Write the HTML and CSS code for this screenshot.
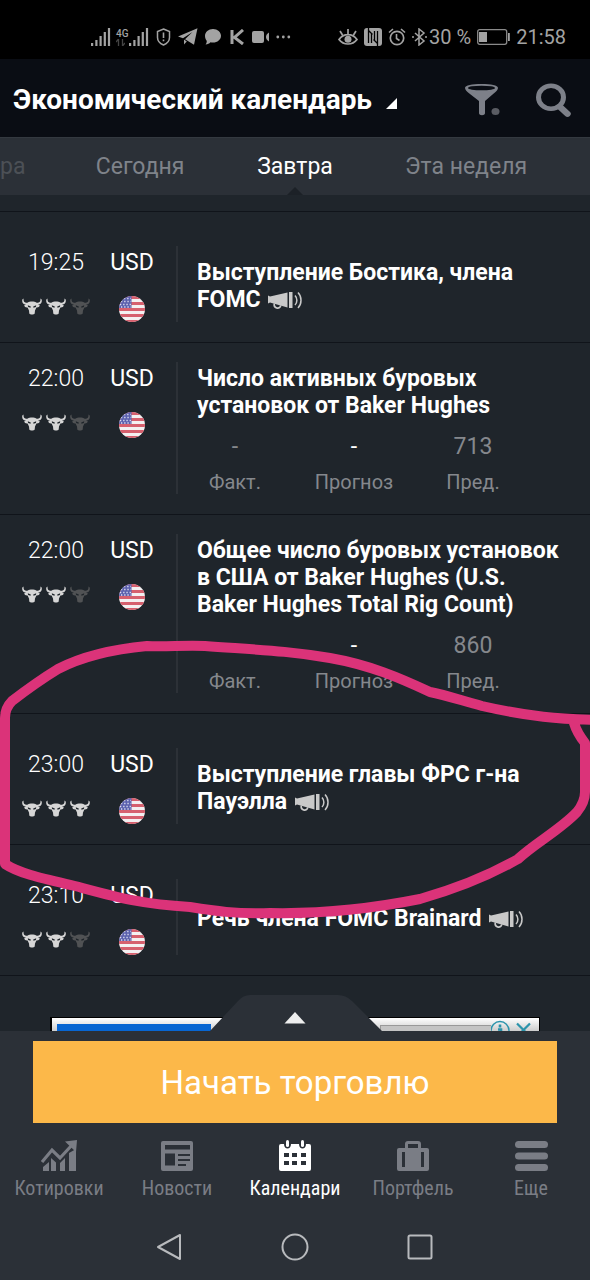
FILE: index.html
```html
<!DOCTYPE html>
<html lang="ru">
<head>
<meta charset="utf-8">
<meta name="viewport" content="width=device-width, initial-scale=1">
<title>Экономический календарь</title>
<link rel="stylesheet" href="styles.css">
</head>
<body>
<svg class="defs" aria-hidden="true">
  <symbol id="bull" viewBox="0 0 20 17">
    <path d="M1.600.5L.3 1.500C-.3 4.300 1 6.500 4 6.700L2.200 7.200c.3 1.600 1.600 2.400 3.400 2.200L7 12.500l.3 3c.8 1.400 4.600 1.400 5.400 0l.3-3 1.400-3.100c1.800.2 3.100-.6 3.400-2.200L16 6.700c3-.2 4.300-2.400 3.700-5.200L18.400.5c.3 2.700-.4 4-2.400 4.300-1.500.1-2-.6-3.500-1-1.700-.3-3.300-.3-5 0-1.500.4-2 1.100-3.500 1C2 4.500 1.300 3.200 1.600.5z"/>
    <path class="bull-eye" d="M5.800 7.300l3 1.200-.3 1.200-2.400-.8zM14.200 7.300l-3 1.200.3 1.200 2.400-.8z"/>
  </symbol>
  <symbol id="flag" viewBox="0 0 26 26">
    <clipPath id="disc"><circle cx="13" cy="13" r="13"/></clipPath>
    <g clip-path="url(#disc)">
      <path fill="#f4f0f1" d="M0 0h26v26H0z"/>
      <path fill="#d6606e" d="M0 0h26v3H0zM0 6h26v3H0zM0 12h26v3H0zM0 18h26v3H0zM0 24h26v2H0z"/>
      <path fill="#5a60ad" d="M0 0h12.500v12H0z"/>
      <path stroke="#dfe0f2" stroke-width="1.300" stroke-dasharray="1.300 1.900" d="M5 2.500h7M2 5.500h10M1 8.500h11M2 11h10"/>
    </g>
  </symbol>
  <symbol id="horn" viewBox="0 0 34 19">
    <path fill="#c9c9c9" d="M0 4.500l2 1L19.500 1.500v15L2 11.500l-2 1zM21 1h3.500v16H21z"/>
    <path fill="none" stroke="#c9c9c9" stroke-width="1.700" d="M6.200 12.500c-.6 5.500 6.300 6 6.500 1.800"/>
    <path fill="none" stroke="#c9c9c9" stroke-width="1.500" d="M27 4.500c2.500 2.500 2.500 7 0 9.500M30 1.500c4 4 4 11.500 0 15.500"/>
  </symbol>
  <symbol id="bars" viewBox="0 0 20 18">
    <path d="M0 15h2.200v3H0zM4.300 12h2.200v6H4.300zM8.500 8h2.200v10H8.500zM12.700 4h2.200v14h-2.200zM16.900 0h2.200v18h-2.200z"/>
  </symbol>
</svg>

<div class="phone">
  <div class="status">
    <div class="status-group">
      <svg class="s-bars" viewBox="0 0 20 18"><use href="#bars"/></svg>
      <span class="net"><span class="net-name">4G</span><svg class="s-arrows" viewBox="0 0 9 7"><path d="M2.500 7V0L0 3M6.500 0v7L9 4" fill="none" stroke="#444" stroke-width="1.300"/></svg></span>
      <svg class="s-bars tight" viewBox="0 0 20 18"><use href="#bars"/></svg>
      <svg class="s-shield" viewBox="0 0 15 18"><path d="M7.500 1l6 2.500v6c0 3.500-2.500 6-6 7.500-3.500-1.500-6-4-6-7.500v-6z" fill="none" stroke="#a3a3a3" stroke-width="1.500"/><path d="M6.700 4.500h1.600v5.500H6.700zM6.700 11.500h1.600v1.700H6.700z"/></svg>
      <svg class="s-plane" viewBox="0 0 20 17"><path d="M19.500.3L0 8.500l5 1.800L14.500 4 7 11.200l9 5.500z"/><path d="M6 11.500v5l2.800-3z"/></svg>
      <svg class="s-chat" viewBox="0 0 16 16"><path d="M8 0c4.500 0 8 3 8 6.800s-3.500 6.800-8 6.800c-1 0-1.700-.1-2.500-.3C4.300 14.600 2.700 15.500.6 15.500c.8-1 1.200-2.200 1.200-3.600C.6 10.600 0 8.800 0 6.800 0 3 3.500 0 8 0z"/></svg>
      <svg class="s-k" viewBox="0 0 15 16"><path d="M2 1v14M13 1L4.500 8.500 13 15" fill="none" stroke="#a3a3a3" stroke-width="3"/></svg>
      <svg class="s-cam" viewBox="0 0 17 12"><rect width="12" height="12" rx="2"/><path d="M17 1.500v9c-4-2-4-7 0-9z"/></svg>
      <svg class="s-dots" viewBox="0 0 15 4"><circle cx="1.800" cy="2" r="1.400"/><circle cx="7.300" cy="2" r="1.400"/><circle cx="12.800" cy="2" r="1.400"/></svg>
    </div>
    <div class="status-group right">
      <svg class="s-eye" viewBox="0 0 20 18"><path d="M1 11.500c4.500-6.500 13.500-6.500 18 0-4.500 6-13.500 6-18 0zM10 6V1M4.500 7L2 3M15.500 7L18 3" fill="none" stroke="#a3a3a3" stroke-width="1.700"/><circle cx="10" cy="11.300" r="3.500"/></svg>
      <svg class="s-nfc" viewBox="0 0 18 18"><rect width="18" height="18" rx="3"/><path d="M4.500 0v15M13.500 3v15M4.500 2.500l4 4M9.500 11.500l4 4M7.500 5v10M10.500 3v10" fill="none" stroke="#000" stroke-width="1.300"/></svg>
      <svg class="s-alarm" viewBox="0 0 18 18"><circle cx="9" cy="10" r="6.700" fill="none" stroke="#a3a3a3" stroke-width="1.700"/><path d="M8.500 6v4.500l3 2M1 4.500L5 1M17 4.500L13 1" fill="none" stroke="#a3a3a3" stroke-width="1.600"/></svg>
      <svg class="s-bt" viewBox="0 0 15 18"><path d="M3 5l9 8-5 4V1l5 4-9 8M0 9h2M13 9h2" fill="none" stroke="#a3a3a3" stroke-width="1.500"/></svg>
      <span class="status-text">30 %</span>
      <svg class="s-batt" viewBox="0 0 33 16"><rect x=".7" y=".7" width="29" height="14.600" rx="2" fill="none" stroke="#8a8a8a" stroke-width="1.300"/><path d="M2 3h8v10H2zM31 4h1.800v8H31z"/></svg>
      <span class="status-text">21:58</span>
    </div>
  </div>

  <header class="header">
    <button class="title" type="button">Экономический календарь
      <svg class="corner" viewBox="0 0 11 11"><path d="M11 0v11H0z"/></svg>
    </button>
    <button class="tool" type="button" aria-label="Фильтр">
      <svg class="funnel" viewBox="0 0 35 36" preserveAspectRatio="none"><path d="M0 4.500C0 1.500 7 0 16.500 0S33 1.500 33 4.500c0 2-2 4-4 6L20 19v14c0 3-6 3-6 0V19L4 10.500C2 8.500 0 6.500 0 4.500z" fill="#7d8089"/><ellipse cx="16.500" cy="4.500" rx="13.500" ry="2.600" fill="#0a0d14"/><circle cx="30.500" cy="31" r="4" fill="#5a5c63"/></svg>
    </button>
    <button class="tool" type="button" aria-label="Поиск">
      <svg class="lens" viewBox="0 0 36 37" preserveAspectRatio="none"><circle cx="15" cy="15.500" r="12.500" fill="none" stroke="#7d8089" stroke-width="5"/><path d="M24 26l7.500 7.500" stroke="#7d8089" stroke-width="6.500" stroke-linecap="round"/></svg>
    </button>
  </header>

  <nav class="tabs">
    <a class="tab edge" href="#">ра</a>
    <a class="tab" href="#">Сегодня</a>
    <a class="tab active" href="#">Завтра</a>
    <a class="tab last" href="#">Эта неделя</a>
  </nav>

  <main class="list">
    <article class="event speech">
      <div class="when"><time>19:25</time><div class="bulls"><svg><use href="#bull"/></svg><svg><use href="#bull"/></svg><svg class="dim"><use href="#bull"/></svg></div></div>
      <div class="currency"><span>USD</span><svg class="flag"><use href="#flag"/></svg></div>
      <div class="info"><h2>Выступление Бостика, члена FOMC <svg class="horn"><use href="#horn"/></svg></h2></div>
    </article>
    <article class="event">
      <div class="when"><time>22:00</time><div class="bulls"><svg><use href="#bull"/></svg><svg><use href="#bull"/></svg><svg class="dim"><use href="#bull"/></svg></div></div>
      <div class="currency"><span>USD</span><svg class="flag"><use href="#flag"/></svg></div>
      <div class="info"><h2>Число активных буровых установок от Baker Hughes</h2>
        <dl class="values"><div><dt>Факт.</dt><dd>-</dd></div><div><dt>Прогноз</dt><dd class="bright">-</dd></div><div><dt>Пред.</dt><dd>713</dd></div></dl></div>
    </article>
    <article class="event">
      <div class="when"><time>22:00</time><div class="bulls"><svg><use href="#bull"/></svg><svg><use href="#bull"/></svg><svg class="dim"><use href="#bull"/></svg></div></div>
      <div class="currency"><span>USD</span><svg class="flag"><use href="#flag"/></svg></div>
      <div class="info"><h2>Общее число буровых установок в США от Baker Hughes (U.S. Baker Hughes Total Rig Count)</h2>
        <dl class="values"><div><dt>Факт.</dt><dd></dd></div><div><dt>Прогноз</dt><dd class="bright">-</dd></div><div><dt>Пред.</dt><dd>860</dd></div></dl></div>
    </article>
    <article class="event speech">
      <div class="when"><time>23:00</time><div class="bulls"><svg><use href="#bull"/></svg><svg><use href="#bull"/></svg><svg><use href="#bull"/></svg></div></div>
      <div class="currency"><span>USD</span><svg class="flag"><use href="#flag"/></svg></div>
      <div class="info"><h2>Выступление главы ФРС г-на Пауэлла <svg class="horn"><use href="#horn"/></svg></h2></div>
    </article>
    <article class="event speech">
      <div class="when"><time>23:10</time><div class="bulls"><svg><use href="#bull"/></svg><svg><use href="#bull"/></svg><svg class="dim"><use href="#bull"/></svg></div></div>
      <div class="currency"><span>USD</span><svg class="flag"><use href="#flag"/></svg></div>
      <div class="info"><h2>Речь члена FOMC Brainard <svg class="horn"><use href="#horn"/></svg></h2></div>
    </article>
    <svg class="marker" viewBox="0 0 590 300" preserveAspectRatio="none" aria-hidden="true">
      <path d="M595 90C560 89 530 87 482 76C460 70 445 65 430 62C400 48 370 35 330 28C290 21 260 20 205 16C185 15 165 17 147 16C115 19 85 25 58 39C40 50 25 61 12 71Q5 78 5 88V234C20 244 45 249 75 256C120 268 140 274 190 277C215 281 235 284 270 283C320 284 370 279 420 269C455 259 490 245 518 229C535 213 560 200 577 182Q585 172 585 162V113Q577 103 574 93"/>
    </svg>
  </main>

  <aside class="ad" aria-label="Реклама">
    <div class="ad-box">
      <span class="ad-blue"></span><span class="ad-gray"></span>
      <svg class="ad-icons" viewBox="0 0 44 12"><g fill="none" stroke="#2a93ab"><circle cx="9" cy="12" r="9" stroke-width="1.400"/><path d="M26 5l13 13M39 5L26 18" stroke-width="2.200"/><path d="M9 6v3M7 11h3v3" stroke-width="2.600"/></g></svg>
    </div>
    <button class="handle" type="button" aria-label="Развернуть">
      <svg viewBox="0 0 172 36"><path d="M0 36L28 6Q33 0 40 0H128Q136 0 142 6L172 36z" fill="#2b3037"/><path d="M85 17l10.500 11.500h-21z" fill="#eee"/></svg>
    </button>
  </aside>

  <footer class="footer">
    <button class="trade" type="button">Начать торговлю</button>
    <nav class="bottom-nav">
      <a href="#"><svg viewBox="0 0 36 32"><path d="M1 22L11 10l8 8L31 5" fill="none" stroke="currentColor" stroke-width="3.200"/><path d="M24 1.500L36 0l-1 12zM2 27l6-5v9H2zM10 18l5 4.500V31h-5zM19 23l5-5v13h-5zM28 13l7-4v22h-7z"/></svg>Котировки</a>
      <a href="#"><svg viewBox="0 0 36 32"><path fill-rule="evenodd" d="M4 1h28q2 0 2 2v26q0 2-2 2H4q-2 0-2-2V3q0-2 2-2zM6 5v4.500h25V5zM6 13.500v12h10v-12zM19 14v2h12v-2zM19 19v2h12v-2zM19 24v2h8v-2z"/></svg>Новости</a>
      <a class="current" href="#"><svg viewBox="0 0 36 32"><path fill-rule="evenodd" d="M2 6q0-2 2-2h3c0 6 7 6 7 0h8c0 6 7 6 7 0h3q2 0 2 2v23q0 2-2 2H4q-2 0-2-2zM7 13v4h5v-4zM15 13v4h5v-4zM24 13v4h5v-4zM7 21v4h5v-4zM15 21v4h5v-4zM24 21v4h5v-4z"/><rect x="9" width="3" height="7" rx="1.500"/><rect x="24" width="3" height="7" rx="1.500"/></svg>Календари</a>
      <a href="#"><svg viewBox="0 0 36 32"><path fill-rule="evenodd" d="M10 8V4q0-3 3-3h10q3 0 3 3v4h6q2 0 2 2v19q0 2-2 2H4q-2 0-2-2V10q0-2 2-2zM13 8h10V4H13zM7 12v15h3V12zM26 12v15h3V12z"/></svg>Портфель</a>
      <a href="#"><svg viewBox="0 0 36 32"><rect x="2" y="1" width="33" height="7" rx="3.500"/><rect x="2" y="12.500" width="33" height="7" rx="3.500"/><rect x="2" y="24" width="33" height="7" rx="3.500"/></svg>Еще</a>
    </nav>
    <div class="system">
      <button type="button" aria-label="Назад"><svg viewBox="0 0 28 28"><path d="M24 2v24L2 14z"/></svg></button>
      <button type="button" aria-label="Домой"><svg viewBox="0 0 28 28"><circle cx="14" cy="14" r="12.500"/></svg></button>
      <button type="button" aria-label="Недавние"><svg viewBox="0 0 28 28"><rect x="2.500" y="2.500" width="23" height="23" rx="1.500"/></svg></button>
    </div>
  </footer>
</div>
</body>
</html>
```
FILE: styles.css
```css
* { box-sizing: border-box; }
body {
  margin: 0;
  background: #1f252b;
  color: #fff;
  font-family: Roboto, "Noto Sans", sans-serif;
}
button { padding: 0; border: 0; background: none; color: inherit; font: inherit; }
a { color: inherit; text-decoration: none; }
svg { display: block; flex: none; }
.defs { position: absolute; width: 0; height: 0; }
.bull-eye { fill: #1f252b; }
.phone { display: flex; flex-direction: column; min-height: 100vh; }

.status {
  display: flex;
  justify-content: space-between;
  padding: 14px 24px 0 91px;
  height: 59px;
  background: #000;
  color: #a3a3a3;
  fill: #a3a3a3;
}
.status-group { display: flex; align-items: center; gap: 7px; }
.status-group.right { gap: 6px; }
.s-bars { width: 20px; height: 18px; }
.s-bars.tight { margin-left: -7px; }
.net { display: flex; flex-direction: column; margin-left: -2px; }
.net-name { font-size: 10px; line-height: 11px; font-weight: 500; }
.s-arrows { width: 9px; height: 7px; }
.s-shield { width: 15px; height: 18px; }
.s-plane { width: 20px; height: 17px; }
.s-chat { width: 16px; height: 16px; }
.s-k { width: 15px; height: 16px; margin-left: 2px; }
.s-cam { width: 17px; height: 12px; }
.s-dots { width: 15px; height: 4px; }
.s-eye { width: 20px; height: 18px; }
.s-nfc { width: 18px; height: 18px; }
.s-alarm { width: 18px; height: 18px; }
.s-bt { width: 15px; height: 18px; }
.s-bt + .status-text { margin-left: -4px; }
.s-batt { width: 33px; height: 16px; }
.status-text { font-size: 20px; line-height: 24px; white-space: nowrap; }

.header {
  display: flex;
  align-items: center;
  gap: 36px;
  height: 78px;
  padding: 3px 18px 0 13px;
  background: #0a0d14;
}
.title {
  display: flex;
  align-items: baseline;
  gap: 14px;
  flex: 1;
  font-size: 28px;
  line-height: 32px;
  font-weight: 700;
  white-space: nowrap;
}
.corner { width: 11px; height: 11px; fill: #fff; }
.funnel { width: 35px; height: 32px; }
.lens { width: 36px; height: 34px; }

.tabs {
  display: grid;
  grid-template-columns: 12% 23.500% 29% 29% 6.500%;
  align-items: center;
  height: 58px;
  background: #2b3037;
  border-top: 1px solid #343940;
  color: #7f838a;
  font-size: 23px;
  text-align: center;
}
.tab { position: relative; line-height: 57px; white-space: nowrap; }
.tab.edge { text-align: left; color: #4c5056; }
.tab.active { color: #fff; }
.tab.active::after {
  content: "";
  position: absolute;
  left: 50%;
  bottom: 0;
  margin-left: -8px;
  border: 8px solid transparent;
  border-top: 0;
  border-bottom-color: #1c2127;
}

.list { position: relative; flex: 1; padding-top: 16px; background: #1f252b; }
.event {
  display: grid;
  grid-template-columns: 104px 56px 1fr;
  padding: 19px 0 20px 4px;
  border-top: 1px solid #10141a;
}
.event.speech { padding-top: 34px; }
.event:nth-of-type(5) { border-bottom: 1px solid #10141a; }
.when, .currency { display: flex; flex-direction: column; align-items: center; }
.when { font-size: 23px; line-height: 34px; font-weight: 300; }
.currency { padding-right: 8px; font-size: 23px; line-height: 34px; }
.bulls { display: flex; gap: 4px; margin-top: 18px; }
.bulls svg { width: 20px; height: 17px; fill: #d6d6d6; }
.bulls .dim { fill: #505254; }
.flag { width: 26px; height: 26px; margin-top: 16px; }
.info {
  display: flex;
  flex-direction: column;
  padding: 3px 20px 0 19px;
  margin-left: 12px;
  border-left: 2px solid #2c3137;
}
.speech .info { justify-content: center; min-height: 76px; }
.info h2 { margin: 0; font-size: 23px; line-height: 27px; font-weight: 700; }
.horn { display: inline-block; width: 34px; height: 19px; margin-left: 2px; vertical-align: -3px; }
.values {
  display: grid;
  grid-template-columns: 76px 162px 76px;
  margin: 12px 0 0;
  color: #85888d;
  text-align: center;
}
.values div { display: flex; flex-direction: column-reverse; }
.values dt { font-size: 20px; line-height: 24px; }
.values dd { margin: 0 0 7px; height: 32px; font-size: 23px; line-height: 32px; }
.values .bright { color: #fff; }
.marker {
  position: absolute;
  left: 0;
  top: 435px;
  width: 100%;
  height: 300px;
  overflow: hidden;
}
.marker path { fill: none; stroke: #db3379; stroke-width: 10; stroke-linejoin: round; stroke-linecap: round; }

.ad { position: relative; display: flex; justify-content: center; padding-top: 21px; height: 35px; background: #1f252b; }
.ad-box {
  display: grid;
  grid-template-columns: 154px 1fr 111px 48px;
  width: 83%;
  height: 14px;
  padding: 0 0 0 5px;
  background: linear-gradient(#fff, #ccc);
  border: 2px solid #000;
  border-width: 1px 1px 0 2px;
}
.ad-blue { margin-top: 6px; background: #0866d2; }
.ad-gray { grid-column: 3; margin-top: 7px; background: #c4c4c4; border: 1px solid #999; border-width: 1px 0 0 1px; }
.ad-icons { width: 44px; height: 13px; }
.handle { position: absolute; left: 50%; bottom: 0; width: 172px; margin-left: -85px; }
.handle svg { width: 172px; height: 36px; }

.footer { padding: 10px 0 0; background: #2b3037; }
.trade {
  display: block;
  width: calc(100% - 66px);
  height: 82px;
  margin: 0 33px;
  background: #fcb849;
  font-size: 33px;
}
.bottom-nav { display: grid; grid-template-columns: repeat(5, 1fr); padding-top: 17px; color: #7a7d85; fill: #7a7d85; }
.bottom-nav a {
  display: flex;
  flex-direction: column;
  align-items: center;
  gap: 3px;
  font-family: "Roboto Condensed", Roboto, sans-serif;
  font-size: 20px;
  line-height: 26px;
}
.bottom-nav svg { width: 36px; height: 32px; }
.bottom-nav .current { color: #fff; fill: #fff; }
.system { display: flex; justify-content: center; gap: 97px; padding: 32px 0 19px; }
.system svg { width: 28px; height: 28px; fill: none; stroke: #b8babd; stroke-width: 2; stroke-linejoin: round; }
```
